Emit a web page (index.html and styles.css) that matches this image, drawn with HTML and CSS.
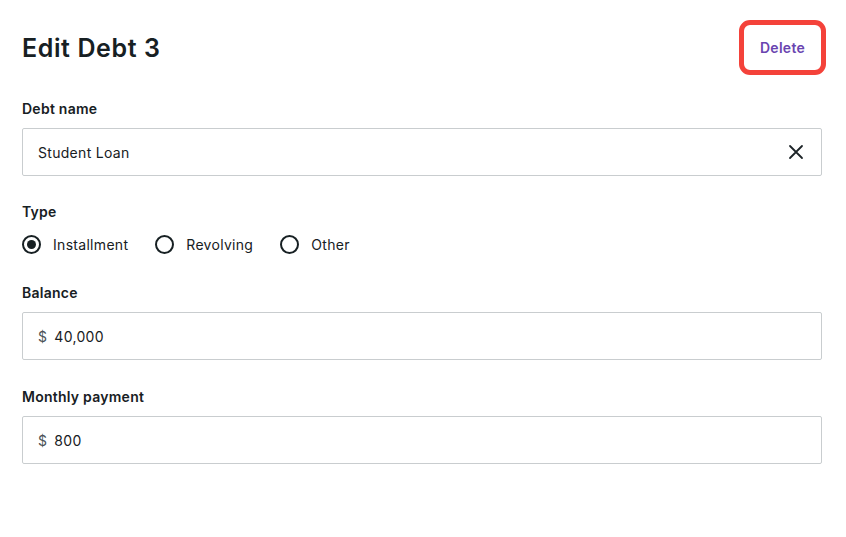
FILE: index.html
```html
<!DOCTYPE html>
<html lang="en">
<head>
    <meta charset="UTF-8">
    <meta name="viewport" content="width=device-width, initial-scale=1.0">
    <title>Edit Debt 3</title>
    <link rel="stylesheet" href="styles.css">
</head>
<body>
    <div class="panel">
        <div class="header">
            <h1>Edit Debt 3</h1>
            <div class="highlight">
                <button class="delete-btn">Delete</button>
            </div>
        </div>

        <div class="field">
            <label class="field-label">Debt name</label>
            <div class="input-box">
                <span class="value">Student Loan</span>
                <button class="clear-btn" aria-label="Clear">
                    <svg width="16" height="16" viewBox="0 0 16 16">
                        <path d="M2 2 L14 14 M14 2 L2 14" stroke="#1d2428" stroke-width="1.8" stroke-linecap="round"/>
                    </svg>
                </button>
            </div>
        </div>

        <div class="field field-radio">
            <label class="field-label">Type</label>
            <div class="radio-group">
                <label class="radio checked"><span class="dot"></span>Installment</label>
                <label class="radio"><span class="dot"></span>Revolving</label>
                <label class="radio"><span class="dot"></span>Other</label>
            </div>
        </div>

        <div class="field field-amount">
            <label class="field-label">Balance</label>
            <div class="input-box">
                <span class="prefix">$</span>
                <span class="value">40,000</span>
            </div>
        </div>

        <div class="field field-amount">
            <label class="field-label">Monthly payment</label>
            <div class="input-box">
                <span class="prefix">$</span>
                <span class="value">800</span>
            </div>
        </div>
    </div>
</body>
</html>
```

FILE: styles.css
```css
:root {
    --text-color: #172023;
    --border-color: #c9cdcf;
    --accent-color: #6a44b0;
    --focus-red: #f4423a;
}

* {
    margin: 0;
    padding: 0;
    box-sizing: border-box;
    font-family: 'Inter', 'Noto Sans', sans-serif;
}

body {
    background: #ffffff;
    color: var(--text-color);
}

.panel {
    padding: 20px 24px 0 22px;
}

/* the focus ring sits a little past the form's right edge */
.header {
    display: flex;
    justify-content: space-between;
    align-items: center;
    height: 55px;
    margin-right: -4px;
    margin-bottom: 25px;
}

h1 {
    font-size: 25px;
    font-weight: 600;
    letter-spacing: 0.6px;
    margin-top: 1px;
}

.highlight {
    border: 5px solid var(--focus-red);
    border-radius: 11px;
    width: 87px;
    height: 55px;
    display: flex;
    align-items: center;
    justify-content: center;
}

.delete-btn {
    background: none;
    border: none;
    color: var(--accent-color);
    font-size: 14px;
    font-weight: 600;
    letter-spacing: 0.3px;
    cursor: pointer;
}

.field {
    margin-bottom: 27px;
}

.field-radio {
    margin-bottom: 30px;
}

.field-amount {
    margin-bottom: 28px;
}

.field-label {
    display: block;
    font-size: 14px;
    font-weight: 600;
    letter-spacing: 0.25px;
    line-height: 17px;
    margin-bottom: 11px;
}

.input-box {
    display: flex;
    align-items: center;
    height: 48px;
    border: 1px solid var(--border-color);
    border-radius: 2px;
    padding: 0 17px 0 15px;
    font-size: 14px;
    letter-spacing: 0.3px;
}

.prefix {
    color: #4a5256;
    margin-right: 7px;
}

.value {
    flex: 1;
}

.clear-btn {
    background: none;
    border: none;
    display: flex;
    cursor: pointer;
}

.radio-group {
    display: flex;
    gap: 27px;
    padding-top: 4px;
}

.radio {
    display: flex;
    align-items: center;
    gap: 12px;
    font-size: 14px;
    letter-spacing: 0.3px;
    cursor: pointer;
}

.dot {
    width: 19px;
    height: 19px;
    border: 2px solid var(--text-color);
    border-radius: 50%;
    display: flex;
    align-items: center;
    justify-content: center;
}

.radio.checked .dot::after {
    content: '';
    width: 9px;
    height: 9px;
    border-radius: 50%;
    background: var(--text-color);
}
```
